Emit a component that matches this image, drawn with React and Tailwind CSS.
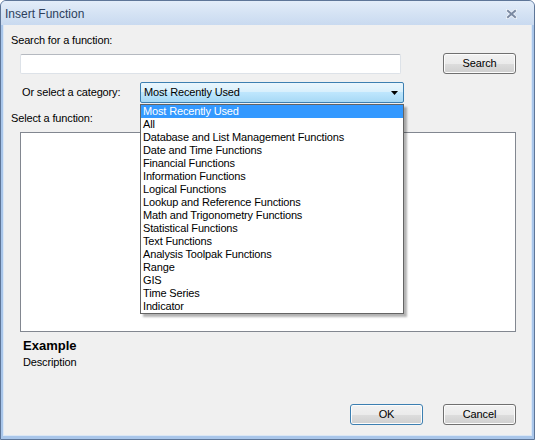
import React from "react";

const items = [
  "Most Recently Used",
  "All",
  "Database and List Management Functions",
  "Date and Time Functions",
  "Financial Functions",
  "Information Functions",
  "Logical Functions",
  "Lookup and Reference Functions",
  "Math and Trigonometry Functions",
  "Statistical Functions",
  "Text Functions",
  "Analysis Toolpak Functions",
  "Range",
  "GIS",
  "Time Series",
  "Indicator",
];

const btn =
  "flex items-center justify-center w-[73px] h-[21px] rounded-[3px] border text-[11px] text-black bg-[linear-gradient(to_bottom,#f2f2f2_0%,#ebebeb_50%,#dddddd_51%,#cfcfcf_100%)] shadow-[inset_0_0_0_1px_#fcfcfc]";

export default function App() {
  return (
    <div
      className="w-[535px] h-[440px] flex flex-col bg-[#a9c6ea] border border-[#5e7698] rounded-t-[6px] overflow-hidden"
      style={{ fontFamily: '"Liberation Sans", Arial, sans-serif' }}
    >
      {/* Title bar */}
      <div className="h-[24px] flex items-center justify-between pl-[4px] pr-[17px] pt-[2px] bg-[linear-gradient(to_bottom,#e3edf9_0%,#d5e3f4_50%,#c9daf0_100%)]">
        <span className="text-[12px] text-[#2d3f5c] leading-none">Insert Function</span>
        <svg width="11" height="10" viewBox="0 0 11 10">
          <path d="M1.5 1.5 L9.5 8.5 M9.5 1.5 L1.5 8.5" stroke="#eef3fa" strokeWidth="3.6" strokeLinecap="square" />
          <path d="M2 2 L9 8 M9 2 L2 8" stroke="#7b8aa2" strokeWidth="2" strokeLinecap="square" />
        </svg>
      </div>

      {/* Client area */}
      <div className="relative flex-1 mx-[2px] mb-[3px] border border-[#dbe7f5] border-t-0">
        <div className="relative h-full bg-[#f0f0f0] flex flex-col pl-[7px] pr-[15px] pb-[10px] text-[11px] tracking-[-0.15px] text-black">
          <div className="mt-[9px] h-[13px] leading-[13px]">Search for a function:</div>

          <div className="mt-[6px] flex items-start h-[21px]">
            <div className="ml-[9px] mt-[1px] w-[381px] h-[20px] bg-white border border-[#dde2e8] border-t-[#b5b9c0] rounded-[2px]" />
            <div className={btn + " ml-[42px] border-[#707070]"}>Search</div>
          </div>

          <div className="mt-[8px] flex items-center h-[21px]">
            <div className="ml-[11px] w-[118px] leading-[13px]">Or select a category:</div>
            <div className="w-[264px] h-[21px] flex items-center justify-between pl-[3px] pr-[5px] border border-[#3c7fb1] rounded-[2px] bg-[linear-gradient(to_bottom,#eaf6fd_0%,#d9f0fc_45%,#bee6fd_50%,#a7d9f5_100%)]">
              <span>Most Recently Used</span>
              <svg width="7" height="4" viewBox="0 0 7 4">
                <path d="M0 0 H7 L3.5 4 Z" fill="#000" />
              </svg>
            </div>
          </div>

          <div className="mt-[9px] h-[13px] leading-[13px]">Select a function:</div>

          <div className="mt-[7px] ml-[9px] w-[496px] h-[200px] bg-white border border-[#828790]" />

          <div className="mt-[6px] ml-[12px] h-[15px] leading-[15px] text-[13px] font-bold tracking-normal">Example</div>
          <div className="mt-[3px] ml-[12px] h-[13px] leading-[13px]">Description</div>

          <div className="mt-auto flex justify-end gap-[20px]">
            <div className={btn + " border-[#3c7fb1] shadow-[inset_0_0_0_1px_#48d8fb]"}>OK</div>
            <div className={btn + " border-[#707070]"}>Cancel</div>
          </div>

          {/* Dropdown overlay */}
          <div className="absolute left-[136px] top-[79px] w-[264px] bg-white border border-[#646464] shadow-[3px_3px_2px_rgba(0,0,0,0.3)]">
            {items.map((it, i) => (
              <div
                key={it}
                className={
                  "h-[13px] leading-[13px] pl-[2px] whitespace-nowrap " +
                  (i === 0 ? "bg-[#3399ff] text-white" : "text-black")
                }
              >
                {it}
              </div>
            ))}
          </div>
        </div>
      </div>
    </div>
  );
}
